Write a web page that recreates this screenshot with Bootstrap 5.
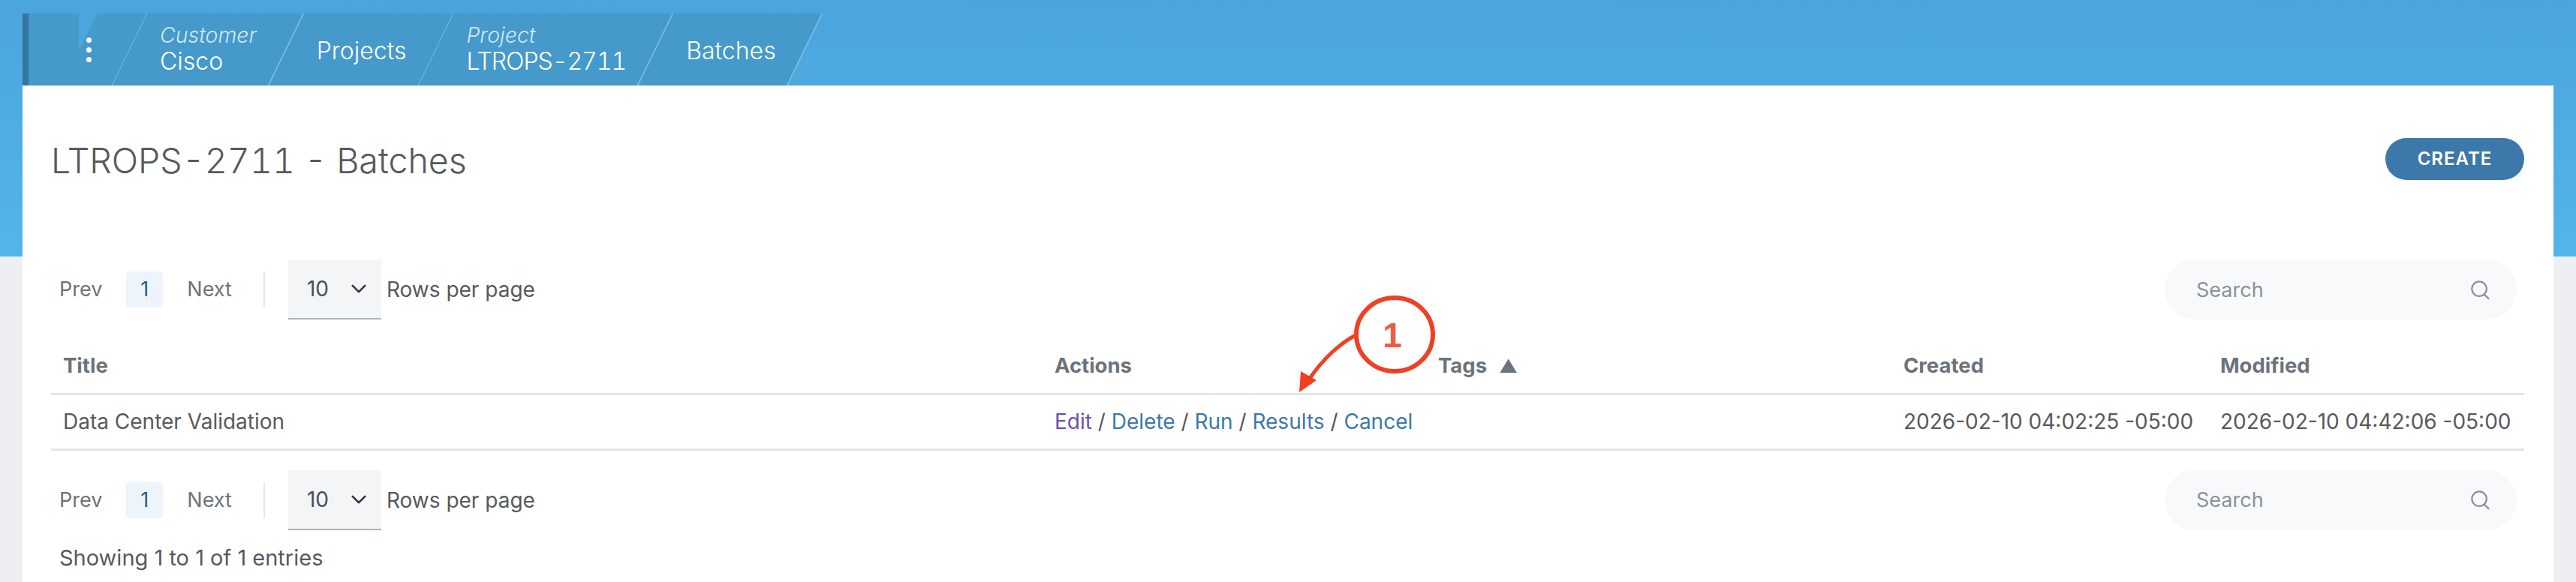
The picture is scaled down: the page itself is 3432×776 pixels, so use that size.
<!DOCTYPE html>
<html lang="en">
<head>
  <meta charset="UTF-8" />
  <meta name="viewport" content="width=device-width, initial-scale=1" />
  <title>LTROPS-2711 - Batches</title>
  <link href="https://cdn.jsdelivr.net/npm/bootstrap@5.3.0/dist/css/bootstrap.min.css" rel="stylesheet" />
  <style>
    html, body { height: 776px; overflow: hidden; }
    body {
      font-family: Inter, "Liberation Sans", sans-serif;
      font-size: 28px;
      color: #58595b;
      background: linear-gradient(#4ba4dc 0, #52b5e7 342px, #eceef2 342px);
    }
    .page-wrap { height: 776px; padding: 18px 30px 0; }

    /* breadcrumb bar */
    .crumbs { height: 96px; }
    .crumb {
      position: relative;
      z-index: 0;
      padding: 0 40px;
      color: #fff;
      font-weight: 300;
      font-size: 32px;
      line-height: 38px;
      font-feature-settings: "tnum";
    }
    .crumb::before {
      content: "";
      position: absolute;
      inset: 0;
      z-index: -1;
      background: #4599cb;
      border-right: 2px solid #7fbde0;
      transform: skewX(-26deg);
    }
    .crumb-menu {
      width: 143px;
      padding: 0 0 0 77px;
      border-left: 8px solid #34769f;
      background: linear-gradient(to right, #4599cb 50%, transparent 50%);
    }
    .crumb-menu::before { left: 50%; }
    .crumb-dots { width: 7px; gap: 6px; }
    .crumb-dots i { width: 7px; height: 7px; border-radius: 50%; background: #fff; }
    .crumb-label { font-size: 28.5px; font-style: italic; color: #d3e8f5; line-height: 32px; }
    .crumb-code { letter-spacing: -1px; }
    .crumb-solo { padding-top: 4px; }

    /* card */
    .sheet { height: 662px; padding: 70px 39px 0 38px; position: relative; }
    .sheet-head { height: 56px; }
    .sheet-title { font-weight: 300; font-size: 46.5px; color: #58595b; padding: 6px 0 0; font-feature-settings: "tnum"; }
    .btn-create {
      --bs-btn-bg: #3d78aa;
      --bs-btn-hover-bg: #3d78aa;
      --bs-btn-color: #fff;
      --bs-btn-hover-color: #fff;
      height: 56px;
      width: 185px;
      padding: 0;
      border: 0;
      font-size: 24px;
      font-weight: 600;
      letter-spacing: 1px;
    }

    /* pager row */
    .pager-row { height: 80px; padding: 0 10px 0 11px; }
    .pager-top { margin-top: 106px; }
    .pager-bottom { margin-top: 26px; }
    .pager-list { gap: 33px; margin: 0 42px 0 0; }
    .pager-list .page-link { padding: 0; border: 0; background: none; color: #6c737b; font-size: 27px; line-height: 48px; }
    .pager-list .active .page-link { width: 49px; text-align: center; background: #edf4fc; color: #275c8a; border-radius: 4px; }
    .pager-rule { width: 2px; height: 48px; background: #e4e6e9; margin-right: 31px; }
    .rows-select {
      width: 124px;
      height: 80px;
      padding: 0 0 0 25px;
      margin-right: 7px;
      border: 0;
      border-bottom: 2px solid #a8b2bd;
      border-radius: 0;
      background-color: #f4f5f7;
      background-position: right 19px center;
      background-size: 22px 22px;
      font-size: 28px;
      color: #46505a;
    }
    .search-pill { width: 469px; height: 80px; padding: 0 35px 0 42px; background: #f8f9fb; border-radius: 40px; }
    .search-pill input { padding: 2px 0 0; border: 0; background: none; font-size: 27px; box-shadow: none; }
    .search-pill input::placeholder { color: #8b9199; opacity: 1; }

    /* table */
    .table.batch-table { table-layout: fixed; margin: 26px 0 0; --bs-table-border-color: #e4e5e7; color: #58595b; }
    .table.batch-table > * > * > * { padding: 0 16px; height: 74px; vertical-align: middle; border-bottom-width: 3px; color: inherit; white-space: nowrap; }
    .table.batch-table > thead > tr > th { height: 73px; color: #6c737b; font-weight: 700; font-size: 27.5px; }
    .col-title { width: 1321px; }
    .col-actions { width: 511px; }
    .col-tags { width: 620px; }
    .col-created { width: 422px; }
    .sort-mark { margin-left: 16px; font-size: 24px; }
    .batch-link { color: #3b78ab; text-decoration: none; }
    .batch-link-seen { color: #6a4fb5; }
    .batch-sep { color: #555; }
    .entries-note { margin: 16px 0 0 11px; line-height: 42px; font-size: 29px; }

    /* red callout drawn on top of the screenshot */
    .callout { position: absolute; left: 1700px; top: 270px; }
    .callout text { font-family: "Liberation Sans", sans-serif; font-weight: 700; font-size: 46px; fill: #ef5a44; }
  </style>
</head>
<body>
  <div class="page-wrap d-flex flex-column">
    <!-- Breadcrumb -->
    <nav class="crumbs d-flex">
      <div class="crumb crumb-menu d-flex align-items-center">
        <span class="crumb-dots d-flex flex-column"><i></i><i></i><i></i></span>
      </div>
      <div class="crumb d-flex flex-column justify-content-center">
        <span class="crumb-label">Customer</span>
        <span>Cisco</span>
      </div>
      <div class="crumb crumb-solo d-flex flex-column justify-content-center"><span>Projects</span></div>
      <div class="crumb d-flex flex-column justify-content-center">
        <span class="crumb-label">Project</span>
        <span class="crumb-code">LTROPS-2711</span>
      </div>
      <div class="crumb crumb-solo d-flex flex-column justify-content-center"><span>Batches</span></div>
    </nav>

    <main class="sheet bg-white">
      <div class="sheet-head d-flex justify-content-between align-items-center">
        <h1 class="sheet-title mb-0">LTROPS-2711 - Batches</h1>
        <button type="button" class="btn btn-create rounded-pill">CREATE</button>
      </div>

      <!-- Top pager -->
      <div class="pager-row pager-top d-flex align-items-center">
        <ul class="pagination pager-list align-items-center">
          <li class="page-item"><a class="page-link" href="#">Prev</a></li>
          <li class="page-item active"><a class="page-link" href="#">1</a></li>
          <li class="page-item"><a class="page-link" href="#">Next</a></li>
        </ul>
        <span class="pager-rule"></span>
        <select class="form-select rows-select"><option>10</option></select>
        <span>Rows per page</span>
        <div class="search-pill d-flex align-items-center ms-auto">
          <input class="form-control" type="text" placeholder="Search" />
          <svg width="29" height="27" viewBox="0 0 29 27" fill="none" stroke="#8b9199" stroke-width="2.4"><circle cx="13" cy="12" r="10.5"/><path d="M20 20l7 6.5"/></svg>
        </div>
      </div>

      <table class="table batch-table">
        <colgroup>
          <col class="col-title" /><col class="col-actions" /><col class="col-tags" /><col class="col-created" /><col />
        </colgroup>
        <thead>
          <tr><th>Title</th><th>Actions</th><th>Tags<span class="sort-mark">▲</span></th><th>Created</th><th>Modified</th></tr>
        </thead>
        <tbody>
          <tr>
            <td>Data Center Validation</td>
            <td>
              <a class="batch-link batch-link-seen" href="#">Edit</a> <span class="batch-sep">/</span>
              <a class="batch-link" href="#">Delete</a> <span class="batch-sep">/</span>
              <a class="batch-link" href="#">Run</a> <span class="batch-sep">/</span>
              <a class="batch-link" href="#">Results</a> <span class="batch-sep">/</span>
              <a class="batch-link" href="#">Cancel</a>
            </td>
            <td></td>
            <td>2026-02-10 04:02:25 -05:00</td>
            <td>2026-02-10 04:42:06 -05:00</td>
          </tr>
        </tbody>
      </table>

      <!-- Bottom pager -->
      <div class="pager-row pager-bottom d-flex align-items-center">
        <ul class="pagination pager-list align-items-center">
          <li class="page-item"><a class="page-link" href="#">Prev</a></li>
          <li class="page-item active"><a class="page-link" href="#">1</a></li>
          <li class="page-item"><a class="page-link" href="#">Next</a></li>
        </ul>
        <span class="pager-rule"></span>
        <select class="form-select rows-select"><option>10</option></select>
        <span>Rows per page</span>
        <div class="search-pill d-flex align-items-center ms-auto">
          <input class="form-control" type="text" placeholder="Search" />
          <svg width="29" height="27" viewBox="0 0 29 27" fill="none" stroke="#8b9199" stroke-width="2.4"><circle cx="13" cy="12" r="10.5"/><path d="M20 20l7 6.5"/></svg>
        </div>
      </div>
      <div class="entries-note">Showing 1 to 1 of 1 entries</div>

      <!-- Annotation -->
      <svg class="callout" width="230" height="150" viewBox="0 0 230 150">
        <ellipse cx="128" cy="62" rx="51" ry="49" fill="#fff" stroke="#ee4023" stroke-width="6"/>
        <text x="125" y="79" text-anchor="middle">1</text>
        <path d="M76 63C55 74 32 95 14 122" fill="none" stroke="#ee4023" stroke-width="5"/>
        <path d="M1 139L3 111 24 123Z" fill="#ee4023"/>
      </svg>
    </main>
  </div>
  <script src="https://cdn.jsdelivr.net/npm/bootstrap@5.3.0/dist/js/bootstrap.bundle.min.js"></script>
</body>
</html>
